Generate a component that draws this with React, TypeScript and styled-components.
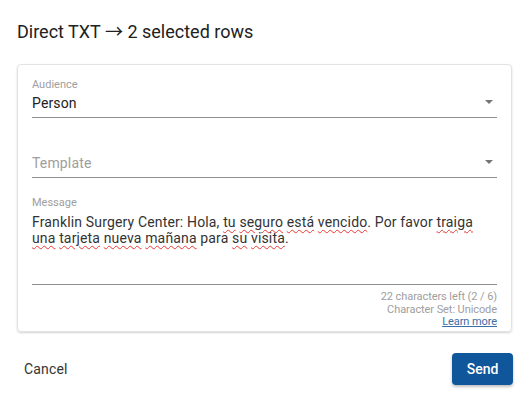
import React from "react";
import styled, { createGlobalStyle } from "styled-components";

const Global = createGlobalStyle`
  html, body { margin: 0; padding: 0; background: #ffffff; }
  body { font-family: Roboto, "Noto Sans", "Liberation Sans", sans-serif; -webkit-font-smoothing: antialiased; }
  * { box-sizing: border-box; }
`;

const Dialog = styled.div`
  width: 529px;
  height: 401px;
  display: flex;
  flex-direction: column;
  background: #fff;
`;

const Title = styled.h2`
  margin: 0;
  padding: 20px 17px 0 17px;
  font-size: 18px;
  line-height: 24px;
  font-weight: 400;
  color: #212121;
`;

const TitleArrow = styled.span`
  font-family: "Noto Sans CJK JP", sans-serif;
  font-size: 18px;
  line-height: 1;
`;

const Card = styled.div`
  margin: 20px 17px 0 17px;
  border: 1px solid #e3e3e3;
  border-radius: 4px;
  box-shadow: 0 1px 2px rgba(0, 0, 0, 0.18);
  padding: 13px 14px 2px 14px;
  display: flex;
  flex-direction: column;
`;

const Field = styled.div<{ $gap?: number }>`
  display: flex;
  flex-direction: column;
  margin-top: ${(p) => p.$gap ?? 0}px;
`;

const Label = styled.div`
  font-size: 11px;
  line-height: 13px;
  height: 13px;
  color: #9e9e9e;
`;

const SelectRow = styled.div`
  margin-top: 2px;
  padding-bottom: 4px;
  border-bottom: 1px solid #8f8f8f;
  display: flex;
  align-items: center;
  justify-content: space-between;
`;

const Value = styled.span<{ $placeholder?: boolean }>`
  font-size: 14px;
  line-height: 20px;
  letter-spacing: 0.15px;
  color: ${(p) => (p.$placeholder ? "#9e9e9e" : "#222222")};
`;

const Arrow = styled.svg`
  width: 8px;
  height: 4px;
  margin-right: 4px;
  margin-top: -2px;
`;

const MessageBox = styled.div`
  margin-top: 5px;
  padding-bottom: 6px;
  min-height: 71px;
  border-bottom: 1px solid #8f8f8f;
  font-size: 14px;
  line-height: 16px;
  letter-spacing: 0.15px;
  color: #333333;
`;

const Misspelled = styled.span`
  text-decoration: underline wavy #e53935;
  text-decoration-thickness: 1px;
  text-underline-offset: 2px;
`;

const Helper = styled.div`
  margin-top: 6px;
  display: flex;
  flex-direction: column;
  align-items: flex-end;
  font-size: 11px;
  line-height: 12.5px;
  letter-spacing: -0.08px;
  color: #9e9e9e;
`;

const Link = styled.a`
  color: #3c6ea6;
  text-decoration: underline;
  cursor: pointer;
`;

const Actions = styled.div`
  margin-top: 21px;
  padding: 0 16px;
  display: flex;
  align-items: center;
  justify-content: space-between;
`;

const TextButton = styled.button`
  border: none;
  background: transparent;
  padding: 0 8px;
  height: 32px;
  font-family: inherit;
  font-size: 14px;
  letter-spacing: 0.15px;
  color: #333333;
`;

const PrimaryButton = styled.button`
  border: none;
  border-radius: 4px;
  background: #0f569b;
  color: #ffffff;
  height: 32px;
  width: 61px;
  font-family: inherit;
  font-size: 14px;
  font-weight: 500;
  box-shadow: 0 2px 3px rgba(0, 0, 0, 0.25);
`;

const DropArrow = () => (
  <Arrow viewBox="0 0 8 4">
    <path d="M0 0 L8 0 L4 4 Z" fill="#757575" />
  </Arrow>
);

const w = (t: string) => <Misspelled>{t}</Misspelled>;

export default function App() {
  return (
    <>
      <Global />
      <Dialog>
        <Title>
          Direct TXT <TitleArrow>→</TitleArrow> 2 selected rows
        </Title>
        <Card>
          <Field>
            <Label>Audience</Label>
            <SelectRow>
              <Value>Person</Value>
              <DropArrow />
            </SelectRow>
          </Field>
          <Field $gap={20}>
            <Label />
            <SelectRow>
              <Value $placeholder>Template</Value>
              <DropArrow />
            </SelectRow>
          </Field>
          <Field $gap={18}>
            <Label>Message</Label>
            <MessageBox>
              Franklin Surgery Center: Hola, {w("tu")} {w("seguro")} {w("está")} {w("vencido")}. Por favor {w("traiga")}{" "}
              {w("una")} {w("tarjeta")} {w("nueva")} {w("mañana")} para {w("su")} {w("visita")}.
            </MessageBox>
          </Field>
          <Helper>
            <span>22 characters left (2 / 6)</span>
            <span>Character Set: Unicode</span>
            <Link>Learn more</Link>
          </Helper>
        </Card>
        <Actions>
          <TextButton>Cancel</TextButton>
          <PrimaryButton>Send</PrimaryButton>
        </Actions>
      </Dialog>
    </>
  );
}
